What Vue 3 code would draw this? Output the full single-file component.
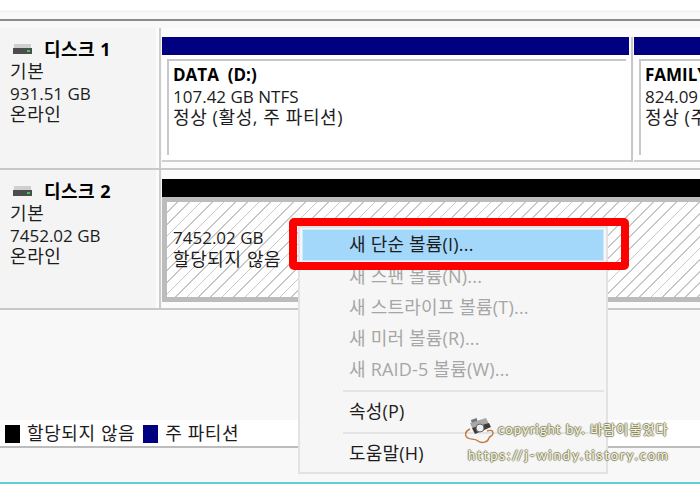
<script setup>
const legend = [
  { label: '할당되지 않음', color: '#000' },
  { label: '주 파티션', color: '#000080' },
]
const items = [
  { label: '새 단순 볼륨(I)...', state: 'active' },
  { label: '새 스팬 볼륨(N)...', state: 'off' },
  { label: '새 스트라이프 볼륨(T)...', state: 'off' },
  { label: '새 미러 볼륨(R)...', state: 'off' },
  { label: '새 RAID-5 볼륨(W)...', state: 'off' },
  { sep: true },
  { label: '속성(P)', state: '' },
  { sep: true },
  { label: '도움말(H)', state: '' },
]
</script>

<template>
  <div class="page">
    <div class="top"></div>
    <div class="disk first">
      <div class="info">
        <div class="title">
          <svg class="drive" width="19" height="11" viewBox="0 0 19 11"><rect x="1" y="0" width="17" height="4" fill="#cfcfcf"/><rect x="0" y="4" width="19" height="6" fill="#4d4d4d"/><rect x="14" y="6" width="3" height="2" fill="#35d04a"/></svg>
          <b class="ko">디스크 1</b>
        </div>
        <div class="ko">기본</div>
        <div>931.51 GB</div>
        <div class="ko">온라인</div>
      </div>
      <div class="vols">
        <div class="vol data">
          <div class="bar blue"></div>
          <div class="body">
            <div class="inner">
              <b>DATA&nbsp; (D:)</b>
              <div>107.42 GB NTFS</div>
              <div class="ko">정상 (활성, 주 파티션)</div>
            </div>
          </div>
        </div>
        <div class="vol family">
          <div class="bar blue"></div>
          <div class="body">
            <div class="inner">
              <b>FAMILY</b>
              <div>824.09 GB NTFS</div>
              <div class="ko">정상 (주 파티션)</div>
            </div>
          </div>
        </div>
      </div>
    </div>
    <div class="disk second">
      <div class="info">
        <div class="title">
          <svg class="drive" width="19" height="11" viewBox="0 0 19 11"><rect x="1" y="0" width="17" height="4" fill="#cfcfcf"/><rect x="0" y="4" width="19" height="6" fill="#4d4d4d"/><rect x="14" y="6" width="3" height="2" fill="#35d04a"/></svg>
          <b class="ko">디스크 2</b>
        </div>
        <div class="ko">기본</div>
        <div>7452.02 GB</div>
        <div class="ko">온라인</div>
      </div>
      <div class="vols column">
        <div class="bar black"></div>
        <div class="hatch">
          <div class="hatch-text">
            <div>7452.02 GB</div>
            <div class="ko">할당되지 않음</div>
          </div>
        </div>
      </div>
    </div>
    <div class="spacer"></div>
    <div class="legend">
      <template v-for="l in legend" :key="l.label">
        <span class="swatch" :style="{ background: l.color }"></span>
        <span class="legend-label ko">{{ l.label }}</span>
      </template>
    </div>
    <div class="foot"></div>
    <div class="teal"></div>

    <div class="menu">
      <template v-for="(it, i) in items" :key="i">
        <div v-if="it.sep" class="sep"></div>
        <div v-else class="item" :class="it.state">{{ it.label }}</div>
      </template>
    </div>
    <div class="callout"></div>

    <div class="mark">
      <svg class="camera" width="30" height="27" viewBox="0 0 30 27">
        <path d="M5 12C0 14 -1 19 3 21C6 23 10 21 13 24C17 27 23 25 24 21C25 18 28 20 28 16C28 13 25 13 22 14" fill="none" stroke="#c07a40" stroke-width="1.4"/>
        <path d="M5 6L21 1L25 9L9 15Z" fill="#a8a8a8"/>
        <path d="M7 11L24 6L26 10L10 17Z" fill="#3c3c3c"/>
        <rect x="6" y="2" width="6" height="3" fill="#777" transform="rotate(-18 9 3)"/>
        <circle cx="15" cy="11" r="4" fill="#eee" stroke="#666"/>
      </svg>
      <div class="mark-line one">copyright by. 바람이불었다</div>
      <div class="mark-line two">https://j-windy.tistory.com</div>
    </div>
  </div>
</template>

<style>
html, body { margin: 0; padding: 0; }
</style>

<style scoped>
.page {
  position: relative;
  width: 700px;
  height: 484px;
  overflow: hidden;
  background: #f8f8f8;
  display: flex;
  flex-direction: column;
  font-family: "Open Sans", "Noto Sans CJK KR", sans-serif;
  font-size: 17px;
  line-height: 21.5px;
  color: #1c1c1c;
}
b { font-weight: 700; color: #000; }
.ko {
  font-size: 18px;
  letter-spacing: 0.6px;
}
.top {
  flex: none;
  height: 21px;
  box-sizing: border-box;
  background: linear-gradient(#fff 0, #fff 10px, #f0f0f0 11px, #fafafa 13px, #fafafa 19px);
  border-bottom: 2px solid #8c8c8c;
}
.disk {
  display: flex;
  flex: none;
  box-sizing: border-box;
}
.first { height: 142px; margin-top: 7px; border-bottom: 2px solid #c8c8c8; }
.second { height: 140px; border-bottom: 2px solid #c8c8c8; }
.info {
  width: 161px;
  flex: none;
  box-sizing: border-box;
  padding: 10px 0 0 10px;
  background: linear-gradient(to right, #f4f4f4 156px, #fbfbfb 156px);
  border-right: 2px solid #cdcdcd;
}
.title {
  display: flex;
  align-items: center;
  gap: 12px;
  padding-left: 3px;
  height: 23px;
}
.title .ko { font-size: 18px; letter-spacing: 0.5px; }
.vols {
  flex: 1;
  min-width: 0;
  display: flex;
  margin-left: 1px;
  padding-top: 9px;
  box-sizing: border-box;
  background: #fbfbfb;
}
.column { flex-direction: column; }
.vol { display: flex; flex-direction: column; flex: none; height: 125px; }
.data { width: 471px; box-sizing: border-box; margin-right: 1px; border-right: 2px solid #c8c8c8; }
.data .bar { margin-right: 2px; }
.family { width: 100px; }
.bar { height: 18px; flex: none; }
.blue { background: #000080; }
.black { background: #000; }
.body {
  flex: 1;
  padding: 4px 5px 0 5px;
  background: #fff;
  border-bottom: 2px solid #cfcfcf;
}
.inner {
  box-sizing: border-box;
  height: 96px;
  padding: 3px 0 0 4px;
  border-left: 2px solid #c8c8c8;
  border-top: 2px solid #c8c8c8;
  white-space: nowrap;
  overflow: hidden;
}
.hatch {
  height: 105px;
  flex: none;
  box-sizing: border-box;
  border: 5px solid #bcbcbc;
  border-right: 0;
  background: repeating-linear-gradient(135deg, #fff 0, #fff 7px, #c8c8c8 7px, #c8c8c8 8.2px);
  padding-top: 25px;
}
.hatch-text { padding-left: 6px; white-space: nowrap; }
.spacer { flex: none; height: 110px; background: #f8f8f8; }
.legend {
  flex: none;
  height: 28px;
  box-sizing: border-box;
  background: #fff;
  display: flex;
  align-items: center;
  padding: 2px 0 0 5px;
  border-bottom: 2px solid #bcbcbc;
}
.swatch { width: 15px; height: 18px; flex: none; }
.legend-label { margin: 0 8px 0 7px; }
.foot { flex: 1; background: #f8f8f8; }
.teal { height: 2px; flex: none; background: #5fcfd0; }
.menu {
  position: absolute;
  left: 298px;
  top: 226px;
  width: 310px;
  height: 248px;
  box-sizing: border-box;
  padding: 1px 2px;
  background: #f6f6f6;
  border: 2px solid #e2e2e2;
}
.item {
  height: 31px;
  line-height: 31px;
  padding-left: 47px;
  font-size: 18px;
  letter-spacing: 0.2px;
  white-space: nowrap;
}
.active {
  height: 32px;
  line-height: 29px;
  box-sizing: border-box;
  background: #a3d8fb;
  border: 1px solid #cfeafc;
  padding-left: 46px;
}
.off { color: #a6a6a6; }
.sep { height: 2px; margin: 5px 0 4px 41px; background: #e4e4e4; }
.callout {
  position: absolute;
  left: 289px;
  top: 218px;
  width: 340px;
  height: 52px;
  box-sizing: border-box;
  border: 8px solid #f00;
  border-radius: 5px;
}
.mark {
  position: absolute;
  left: 465px;
  top: 417px;
  width: 235px;
  height: 60px;
}
.camera { position: absolute; left: 0; top: 0; }
.mark-line {
  position: absolute;
  white-space: nowrap;
  font-family: "Lato", "Noto Sans CJK KR", sans-serif;
  color: #fbf8d8;
  text-shadow: 1px 0 1px #85856c, -1px 0 1px #85856c, 0 1px 1px #85856c, 0 -1px 1px #85856c;
}
.one { left: 33px; top: 2px; font-size: 13px; letter-spacing: 1.1px; }
.two { left: 3px; top: 28px; font-size: 13px; letter-spacing: 1.9px; }
</style>
